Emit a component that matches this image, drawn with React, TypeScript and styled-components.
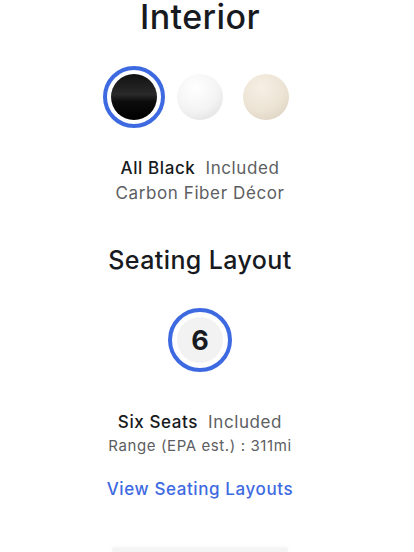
import styled, { createGlobalStyle } from "styled-components";

const GlobalStyle = createGlobalStyle`
  body {
    margin: 0;
    background: #fff;
    font-family: Inter, "Liberation Sans", sans-serif;
    color: #171a20;
  }
`;

const Page = styled.div`
  width: 400px;
  height: 552px;
  overflow: hidden;
  display: flex;
  flex-direction: column;
  align-items: center;
`;

const Title = styled.h2<{ $size: number; $top: number }>`
  margin: ${({ $top }) => $top}px 0 0;
  font-size: ${({ $size }) => $size}px;
  font-weight: 500;
  line-height: 1;
  letter-spacing: 0.4px;
`;

const SwatchRow = styled.div`
  display: flex;
  gap: 4px;
  margin-top: 32px;
`;

const SwatchRing = styled.div<{ $active: boolean }>`
  width: 46px;
  height: 46px;
  padding: 4px;
  border-radius: 50%;
  border: 4px solid ${({ $active }) => ($active ? "#3e6ae1" : "transparent")};
  box-sizing: content-box;
  display: flex;
  align-items: center;
  justify-content: center;
`;

const Swatch = styled.div<{ $bg: string }>`
  width: 46px;
  height: 46px;
  border-radius: 50%;
  background: ${({ $bg }) => $bg};
`;

const InfoLine = styled.div<{ $size: number; $top: number }>`
  margin-top: ${({ $top }) => $top}px;
  font-size: ${({ $size }) => $size}px;
  color: #5c5e62;
  letter-spacing: 0.6px;
  line-height: 1.3;
`;

const Name = styled.span`
  color: #171a20;
  font-weight: 500;
  margin-right: 10px;
`;

const SeatRing = styled.div`
  margin-top: 35px;
  width: 46px;
  height: 46px;
  padding: 5px;
  border-radius: 50%;
  border: 4px solid #3e6ae1;
  box-sizing: content-box;
  display: flex;
  align-items: center;
  justify-content: center;
`;

const SeatBadge = styled.div`
  width: 46px;
  height: 46px;
  border-radius: 50%;
  background: #f2f2f2;
  display: flex;
  align-items: center;
  justify-content: center;
  font-size: 27px;
  font-weight: 700;
`;

const LinkButton = styled.a`
  margin-top: 22px;
  color: #3e6ae1;
  font-size: 17px;
  font-weight: 500;
  line-height: 1.3;
  letter-spacing: 0.6px;
  text-decoration: none;
`;

const BottomButton = styled.div`
  margin-top: 48px;
  width: 176px;
  height: 40px;
  border-radius: 6px;
  background: #f4f4f4;
  box-shadow: 0 -1px 3px rgba(0, 0, 0, 0.05);
`;

// swatch fills, shaded to look like round fabric samples
const swatches = [
  { bg: "linear-gradient(180deg, #111 0%, #2a2a2a 45%, #0c0c0c 60%, #000 100%)", active: true },
  { bg: "radial-gradient(circle at 40% 30%, #ffffff 0%, #f3f3f3 55%, #d9d9d9 100%)", active: false },
  { bg: "radial-gradient(circle at 40% 30%, #f6efe4 0%, #ece3d4 55%, #d8cdbb 100%)", active: false },
];

export default function App() {
  return (
    <Page>
      <GlobalStyle />
      <Title $size={34} $top={0}>Interior</Title>
      <SwatchRow>
        {swatches.map((s, i) => (
          <SwatchRing key={i} $active={s.active}>
            <Swatch $bg={s.bg} />
          </SwatchRing>
        ))}
      </SwatchRow>
      <InfoLine $size={17} $top={29}>
        <Name>All Black</Name>Included
      </InfoLine>
      <InfoLine $size={17} $top={3}>Carbon Fiber Décor</InfoLine>
      <Title $size={25} $top={44}>Seating Layout</Title>
      <SeatRing>
        <SeatBadge>6</SeatBadge>
      </SeatRing>
      <InfoLine $size={17} $top={39}>
        <Name>Six Seats</Name>Included
      </InfoLine>
      <InfoLine $size={15} $top={3}>Range (EPA est.) : 311mi</InfoLine>
      <LinkButton href="#">View Seating Layouts</LinkButton>
      <BottomButton />
    </Page>
  );
}
